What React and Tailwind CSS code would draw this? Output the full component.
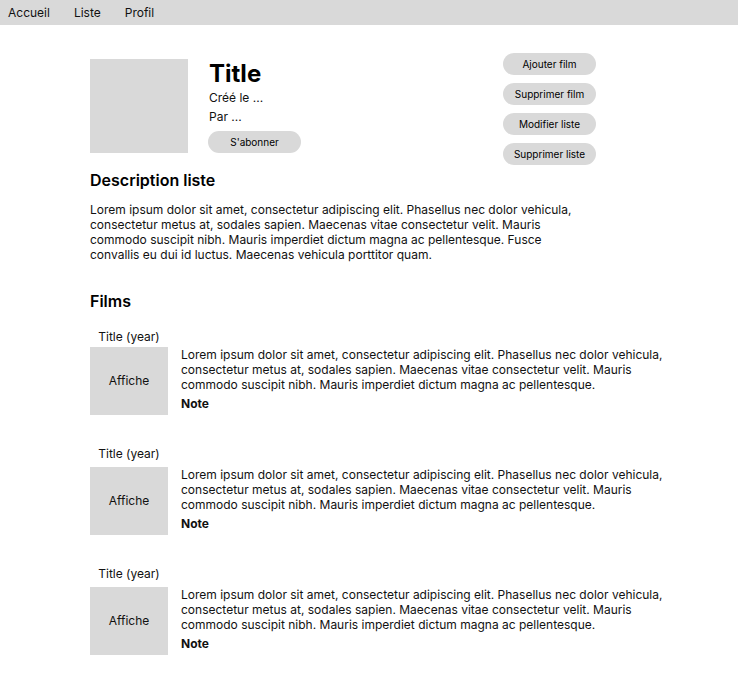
const LOREM_LIST =
  "Lorem ipsum dolor sit amet, consectetur adipiscing elit. Phasellus nec dolor vehicula, consectetur metus at, sodales sapien. Maecenas vitae consectetur velit. Mauris commodo suscipit nibh. Mauris imperdiet dictum magna ac pellentesque. Fusce convallis eu dui id luctus. Maecenas vehicula porttitor quam.";

const LOREM_FILM =
  "Lorem ipsum dolor sit amet, consectetur adipiscing elit. Phasellus nec dolor vehicula, consectetur metus at, sodales sapien. Maecenas vitae consectetur velit. Mauris commodo suscipit nibh. Mauris imperdiet dictum magna ac pellentesque.";

const ACTIONS = ["Ajouter film", "Supprimer film", "Modifier liste", "Supprimer liste"];

const FILMS = [1, 2, 3];

const Pill = ({ children }) => (
  <button className="w-[93px] h-[22px] rounded-full bg-[#d9d9d9] text-[10px] leading-none text-black">
    {children}
  </button>
);

function FilmItem({ first }) {
  return (
    <div>
      <p className="w-[78px] text-center text-[12px] leading-[15px]">Title (year)</p>
      <div className={`flex items-start gap-[13px] ${first ? "mt-[3px]" : "mt-[6px]"}`}>
        <div className="w-[78px] h-[68px] shrink-0 bg-[#d9d9d9] flex items-center justify-center text-[12px]">
          Affiche
        </div>
        <div className="w-[484px]">
          <p className="text-[12px] leading-[15px]">{LOREM_FILM}</p>
          <p className="mt-[4px] text-[12px] leading-[15px] font-bold">Note</p>
        </div>
      </div>
    </div>
  );
}

export default function App() {
  return (
    <div className="min-h-[676px] bg-white text-[#111] font-['Inter','Noto_Sans',sans-serif]">
      <nav className="h-[25px] bg-[#d9d9d9] flex items-center gap-[24px] px-[8px] text-[12px] pt-[1px]">
        <span>Accueil</span>
        <span>Liste</span>
        <span>Profil</span>
      </nav>

      <main className="pl-[90px] pt-[28px] pb-[20px]">
        <div className="flex items-start">
          <div className="mt-[6px] w-[98px] h-[94px] bg-[#d9d9d9] shrink-0" />
          <div className="mt-[6px] ml-[20px] w-[295px]">
            <h1 className="ml-[1px] text-[24px] leading-[29px] font-bold text-black">Title</h1>
            <p className="ml-[1px] mt-[2px] text-[12px] leading-[15px]">Créé le ...</p>
            <p className="ml-[1px] mt-[4px] text-[12px] leading-[15px]">Par ...</p>
            <div className="mt-[4px]">
              <Pill>S'abonner</Pill>
            </div>
          </div>
          <div className="flex flex-col gap-[8px]">
            {ACTIONS.map((a) => (
              <Pill key={a}>{a}</Pill>
            ))}
          </div>
        </div>

        <h2 className="mt-[5px] text-[16px] leading-[20px] font-semibold text-black">Description liste</h2>
        <p className="mt-[12px] w-[488px] text-[12px] leading-[15px]">{LOREM_LIST}</p>

        <h2 className="mt-[29px] text-[16px] leading-[20px] font-semibold text-black">Films</h2>
        <div className="mt-[18px] flex flex-col gap-[31px]">
          {FILMS.map((f, i) => (
            <FilmItem key={f} first={i === 0} />
          ))}
        </div>
      </main>
    </div>
  );
}
